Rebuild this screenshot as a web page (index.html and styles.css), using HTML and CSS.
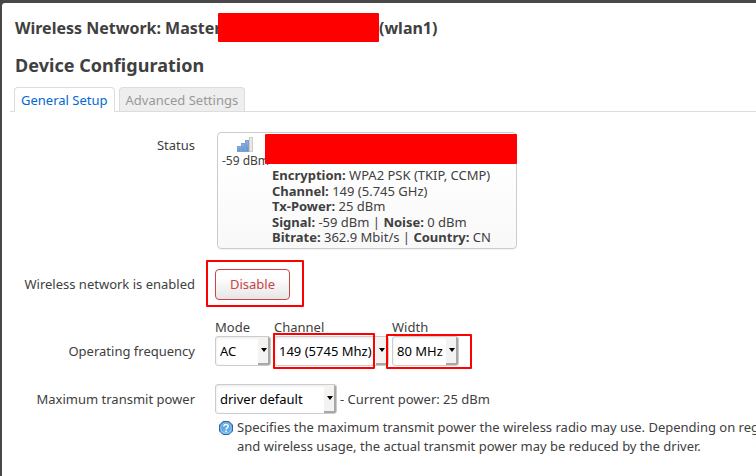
FILE: index.html
```html
<!DOCTYPE html>
<html lang="en">
<head>
<meta charset="utf-8">
<title>Wireless Network</title>
<link rel="stylesheet" href="styles.css">
</head>
<body>
<main class="modal">
  <h4 class="title"><span class="title-name">Wireless Network: Master</span><span>(wlan1)</span><i class="redact redact-title"></i></h4>
  <h3 class="heading">Device Configuration</h3>
  <ul class="tabs">
    <li class="tab active">General Setup</li>
    <li class="tab">Advanced Settings</li>
  </ul>

  <div class="row row-status">
    <div class="label">Status</div>
    <div class="badge">
      <div class="signal">
        <svg width="16" height="15" viewBox="0 0 16 15">
          <defs><linearGradient id="bar" x1="0" x2="0" y1="0" y2="1"><stop offset="0" stop-color="#8fb4e0"/><stop offset="1" stop-color="#5c90cc"/></linearGradient></defs>
          <g fill="url(#bar)" stroke="#7ba2d2" stroke-width="1">
            <rect x="0.5" y="9.5" width="3" height="5"/>
            <rect x="4.5" y="6.5" width="3" height="8"/>
            <rect x="8.5" y="3.5" width="3" height="11"/>
          </g>
          <rect x="12.5" y="0.5" width="3" height="14" fill="#e9e9e4" stroke="#cfcfca"/>
        </svg>
        <span>-59 dBm</span>
      </div>
      <div class="details">
        <div><b>Encryption:</b> WPA2 PSK (TKIP, CCMP)</div>
        <div><b>Channel:</b> 149 (5.745 GHz)</div>
        <div><b>Tx-Power:</b> 25 dBm</div>
        <div><b>Signal:</b> -59 dBm | <b>Noise:</b> 0 dBm</div>
        <div><b>Bitrate:</b> 362.9 Mbit/s | <b>Country:</b> CN</div>
      </div>
      <i class="redact redact-badge"></i>
    </div>
  </div>

  <div class="row row-enable">
    <div class="label">Wireless network is enabled</div>
    <div class="mark-anchor"><button class="btn">Disable</button><i class="mark mark-button"></i></div>
  </div>

  <div class="row row-freq">
    <div class="label">Operating frequency</div>
    <div class="freq">
      <div class="field mode"><span class="caption">Mode</span><div class="select">AC<i class="arrow"></i></div></div>
      <div class="field channel"><span class="caption">Channel</span><div class="select">149 (5745 Mhz)<i class="arrow"></i></div><i class="mark mark-channel"></i></div>
      <div class="field width"><span class="caption">Width</span><div class="select">80 MHz<i class="arrow"></i></div><i class="mark mark-width"></i></div>
    </div>
  </div>

  <div class="row row-power">
    <div class="label">Maximum transmit power</div>
    <div>
      <div class="power"><div class="select">driver default<i class="arrow"></i></div><span>- Current power: 25 dBm</span></div>
      <div class="help">
        <svg width="14" height="14" viewBox="0 0 14 14">
          <defs><linearGradient id="orb" x1="0" x2="0" y1="0" y2="1"><stop offset="0" stop-color="#4f8fd0"/><stop offset="1" stop-color="#6dbcf2"/></linearGradient></defs>
          <path d="M4 .5h6l3.500 3.500v6l-3.500 3.500h-6l-3.500-3.500v-6z" fill="url(#orb)" stroke="#2f659f" stroke-linejoin="round"/>
          <circle cx="7" cy="7" r="5.200" fill="none" stroke="#a4cdf0" stroke-width=".8"/>
          <path d="M4.800 5.500C4.800 2.900 9.200 2.900 9.200 5.300C9.200 6.900 7 6.700 7 8.400M7 9.400v1.500" fill="none" stroke="#fff" stroke-width="1.500"/>
        </svg>
        <p>Specifies the maximum transmit power the wireless radio may use. Depending on regulatory requirements<br>and wireless usage, the actual transmit power may be reduced by the driver.</p>
      </div>
    </div>
  </div>
</main>
</body>
</html>
```
FILE: styles.css
```css
* { box-sizing: border-box; }
html, body { height: 100%; }
body {
  margin: 0;
  padding: 3px 0 0 2px;
  background: #484848;
  color: #404040;
  font: 13px/18px "Noto Sans", sans-serif;
  overflow: hidden;
}
.modal {
  height: 473px;
  padding: 7px 0 0 8px;
  background: #fff;
  border-top-left-radius: 3px;
  overflow: hidden;
  white-space: nowrap;
}
.title {
  position: relative;
  display: flex;
  margin: 0 0 0 5px;
  font-size: 16px;
  line-height: 36px;
  height: 37px;
}
.title-name { width: 364px; }
.redact { position: absolute; background: #f00; border-radius: 1px; }
.redact-title { left: 203px; top: 3px; width: 161px; height: 29px; }
.heading { margin: 0 0 0 5px; font-size: 18px; line-height: 36px; height: 40px; letter-spacing: .04px; }
.tabs {
  display: flex;
  gap: 4px;
  height: 25px;
  margin: 0;
  padding: 0 0 0 4px;
  list-style: none;
  border-bottom: 1px solid #ddd;
}
.tab {
  height: 24px;
  padding: 0 6px;
  line-height: 25px;
  border: 1px solid #ddd;
  border-bottom: 0;
  border-radius: 4px 4px 0 0;
  background: #eee;
  color: #999;
}
.tab.active { height: 25px; background: #fff; color: #0069d6; }

.row { display: grid; grid-template-columns: 185px 1fr; column-gap: 20px; }
.label { text-align: right; }
.row-status { margin-top: 20px; }
.row-status .label { padding-top: 4px; }
.badge {
  position: relative;
  display: flex;
  width: 300px;
  height: 117px;
  margin-left: 2px;
  border: 1px solid #ccc;
  border-radius: 4px;
  background: linear-gradient(#fff, #fff 25%, #f8f8f8);
  box-shadow: 0 1px 1px rgba(0, 0, 0, .05);
}
.signal {
  display: flex;
  flex-direction: column;
  align-items: center;
  width: 54px;
  padding-top: 4px;
  font-size: 12px;
  line-height: 17px;
}
.signal svg { display: block; }
.signal span { padding-left: 1px; }
.details { padding-top: 35px; line-height: 15.600px; }
.redact-badge { left: 47px; top: 1px; width: 252px; height: 30px; }

.row-enable { margin-top: 20px; }
.row-enable .label { padding-top: 6px; }
.mark-anchor { position: relative; }
.btn {
  display: block;
  width: 75px;
  height: 31px;
  padding: 0 0 2px;
  border: 1px solid #c44;
  border-radius: 4px;
  background: linear-gradient(#fff, #fff 25%, #e6e6e6);
  color: #c44;
  font: 13px/18px "Noto Sans", sans-serif;
}
.mark { position: absolute; border: 2px solid #f00; border-radius: 1px; }
.mark-button { left: -9px; top: -9px; width: 98px; height: 47px; }

.row-freq { margin-top: 18px; }
.row-freq .label { padding-top: 24px; }
.freq { display: flex; gap: 3px; }
.field { position: relative; }
.caption { display: block; height: 18px; line-height: 18px; }
.mode { width: 56px; }
.channel { width: 115px; }
.width { width: 67px; }
.select {
  display: flex;
  justify-content: space-between;
  height: 30px;
  padding-left: 4px;
  border: 1px solid #ccc;
  border-radius: 3px;
  background: #fff;
  color: #000;
  line-height: 29px;
  overflow: hidden;
  box-shadow: inset 0 1px 3px rgba(0, 0, 0, .1);
}
.arrow {
  flex: none;
  display: grid;
  place-items: center;
  width: 12px;
  height: 28px;
  padding-left: 2px;
  background: #f4f3f1;
  border-right: 2px solid #a8a8a8;
  border-bottom: 2px solid #a8a8a8;
}
.arrow::before {
  content: "";
  border: 3px solid transparent;
  border-top: 4px solid #000;
  border-bottom: 0;
}
.mark-channel { left: -1px; top: 15px; width: 102px; height: 36px; }
.mark-width { left: -6px; top: 16px; width: 86px; height: 35px; }

.row-power { margin-top: 18px; }
.row-power .label { padding-top: 6px; }
.power { display: flex; align-items: center; gap: 3px; }
.power .select { width: 122px; }
.help { display: flex; gap: 4px; margin: 4px 0 0 4px; }
.help svg { flex: none; margin-top: 3px; }
.help p { margin: 0; line-height: 19px; }
```
